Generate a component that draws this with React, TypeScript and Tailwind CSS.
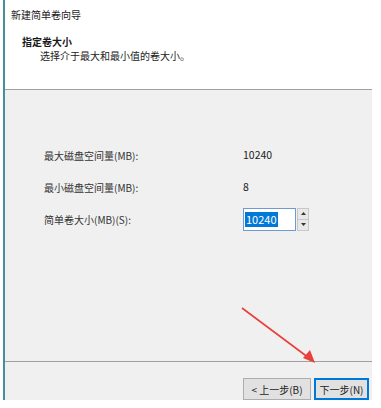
const font = "font-['Microsoft_YaHei','Noto_Sans_CJK_SC',sans-serif]";

const rows = [
    { label: "最大磁盘空间量(MB):", value: "10240" },
    { label: "最小磁盘空间量(MB):", value: "8" }
];

const SpinBox = () => (
    <div className="flex h-[23px]">
        <div className="w-[53px] h-full border border-[#6b9bd1] bg-white flex items-center pl-[1px]">
            <span className="bg-[#0078d7] text-white text-[11px] leading-[15px] px-[1px]">10240</span>
        </div>
        <div className="w-[12px] h-full ml-[1px] flex flex-col border border-[#c8c8c8] bg-[#e8e8e8]">
            <div className="flex-1 flex items-center justify-center border-b border-[#c8c8c8]">
                <svg width="5" height="3" viewBox="0 0 5 3"><path d="M0 3 L2.5 0 L5 3 Z" fill="#333" /></svg>
            </div>
            <div className="flex-1 flex items-center justify-center">
                <svg width="5" height="3" viewBox="0 0 5 3"><path d="M0 0 L2.5 3 L5 0 Z" fill="#333" /></svg>
            </div>
        </div>
    </div>
);

const Arrow = () => (
    <svg className="absolute left-[232px] top-[306px]" width="80" height="60" viewBox="0 0 80 60">
        <line x1="5" y1="2" x2="72" y2="52" stroke="#e8403a" strokeWidth="1.6" />
        <path d="M78 57 L66 52 L73 44 Z" fill="#e8403a" />
    </svg>
);

export default function App() {
    return (
        <div className={`w-[381px] h-[408px] bg-white ${font}`}>
            <div className="relative ml-[3px] w-[369px] h-[400px] border-l-2 border-[#4b8c9c] flex flex-col">
                <header className="h-[90px] bg-white border-b border-[#a0a0a0] text-[10px] text-[#1a1a1a]">
                    <div className="pl-[6px] pt-[8px] leading-[14px]">新建简单卷向导</div>
                    <div className="pl-[17px] mt-[13px] font-bold leading-[14px]">指定卷大小</div>
                    <div className="pl-[35px] leading-[14px] text-[#222]">选择介于最大和最小值的卷大小。</div>
                </header>
                <section className="flex-1 bg-[#f0f0f0] pl-[39px] pt-[49px] text-[10px] text-[#333]">
                    {rows.map(row => (
                        <div key={row.label} className="flex items-center h-[32px]">
                            <span className="w-[199px]">{row.label}</span>
                            <span className="text-[10.5px] text-[#222]">{row.value}</span>
                        </div>
                    ))}
                    <div className="flex items-center h-[32px]">
                        <span className="w-[199px]">简单卷大小(MB)(S):</span>
                        <SpinBox />
                    </div>
                </section>
                <footer className="h-[39px] bg-[#f0f0f0] border-t border-[#a0a0a0] flex items-start justify-end pt-[16px] pr-[3px] gap-[3px] text-[10px] text-[#222]">
                    <button className="w-[68px] h-[22px] bg-[#e1e1e1] border border-[#adadad] flex items-center justify-center">
                        &lt; 上一步(B)
                    </button>
                    <button className="w-[55px] h-[22px] bg-[#e1e1e1] border-2 border-[#0078d7] flex items-center justify-center">
                        下一步(N)
                    </button>
                </footer>
                <Arrow />
            </div>
        </div>
    );
}
